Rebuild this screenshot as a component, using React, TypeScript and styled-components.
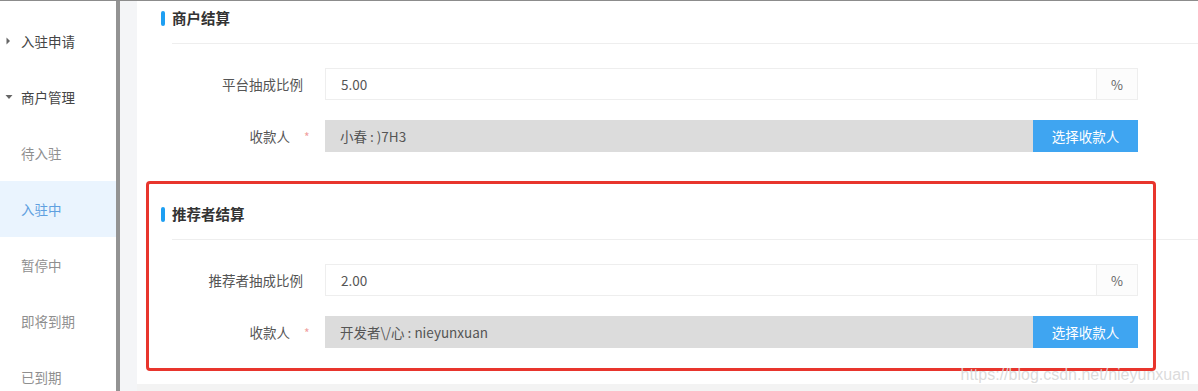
import React from "react";
import styled, { createGlobalStyle } from "styled-components";

const GlobalStyle = createGlobalStyle`
  html, body { margin: 0; padding: 0; background: #f3f3f3; }
  body { font-family: "Noto Sans CJK SC", "Noto Sans", sans-serif; }
  * { box-sizing: border-box; }
`;

const Page = styled.div`
  display: flex;
  width: 1198px;
  height: 391px;
  overflow: hidden;
  border-top: 1px solid #8c8c8c;
  background: #f3f3f3;
  position: relative;
`;

const Sidebar = styled.nav`
  width: 116px;
  flex: none;
  background: #ffffff;
  padding-top: 12px;
  display: flex;
  flex-direction: column;
  overflow: hidden;
`;

const SideItem = styled.div<{ $level: number; $active?: boolean }>`
  height: 56px;
  flex: none;
  display: flex;
  align-items: center;
  padding-left: 21px;
  position: relative;
  font-size: 13.5px;
  color: ${(p) => (p.$active ? "#5fa0e0" : p.$level === 0 ? "#454545" : "#8f8f8f")};
  background: ${(p) => (p.$active ? "#eaf4fe" : "transparent")};
`;

const Caret = styled.svg`
  position: absolute;
  left: 5px;
  top: 50%;
  transform: translateY(-50%);
`;

const Splitter = styled.div`
  width: 4px;
  flex: none;
  background: #939393;
`;

const Gutter = styled.div`
  width: 17px;
  flex: none;
  background: #f4f5f7;
`;

const Main = styled.main`
  flex: 1;
  height: 383px;
  background: #ffffff;
  padding-top: 7px;
  display: flex;
  flex-direction: column;
  gap: 52px;
`;

const Section = styled.section`
  position: relative;
  display: flex;
  flex-direction: column;
`;

const SectionHeader = styled.div`
  height: 20px;
  display: flex;
  align-items: center;
  gap: 7px;
  padding-left: 24px;
`;

const Bar = styled.span`
  width: 4px;
  height: 15px;
  border-radius: 2px;
  background: #1e9ff2;
`;

const Title = styled.h3`
  margin: 0;
  font-size: 14.5px;
  font-weight: 700;
  color: #333333;
  line-height: 20px;
`;

const Divider = styled.div`
  height: 1px;
  margin: 15px 0 0 35px;
  background: #eeeeee;
`;

const Form = styled.div`
  margin-top: 24px;
  display: flex;
  flex-direction: column;
  gap: 20px;
`;

const Row = styled.div`
  display: flex;
  align-items: center;
  height: 32px;
  margin-right: 60px;
`;

const Label = styled.label<{ $required?: boolean }>`
  width: 188px;
  flex: none;
  display: flex;
  justify-content: flex-end;
  align-items: center;
  padding-right: ${(p) => (p.$required ? "14px" : "22px")};
  font-size: 13.5px;
  color: #555555;
`;

const Star = styled.span`
  margin-left: 14px;
  width: 7px;
  color: #f0a0a0;
  font-size: 12px;
`;

const Field = styled.div<{ $readOnly?: boolean }>`
  flex: 1;
  height: 32px;
  display: flex;
  align-items: stretch;
  border: ${(p) => (p.$readOnly ? "none" : "1px solid #eeeeee")};
  background: ${(p) => (p.$readOnly ? "#dcdcdc" : "#ffffff")};
`;

const Value = styled.div`
  flex: 1;
  display: flex;
  align-items: center;
  padding-left: 15px;
  font-size: 13.5px;
  color: #555555;
`;

const Addon = styled.div`
  width: 41px;
  display: flex;
  align-items: center;
  justify-content: center;
  border-left: 1px solid #eeeeee;
  background: #fcfcfc;
  font-size: 13px;
  color: #666666;
`;

const PickButton = styled.button`
  width: 105px;
  border: none;
  background: #3fa5f1;
  color: #ffffff;
  font-family: inherit;
  font-size: 13.5px;
  padding: 0;
  cursor: pointer;
`;

const Highlight = styled.div`
  position: absolute;
  left: 9px;
  top: -23px;
  width: 1010px;
  height: 190px;
  border: 3px solid #e8352d;
  border-radius: 4px;
  pointer-events: none;
`;

const Watermark = styled.div`
  position: absolute;
  right: 8px;
  bottom: 7px;
  font-family: "Liberation Sans", Arial, sans-serif;
  font-size: 16px;
  color: rgba(215, 215, 215, 0.9);
  z-index: 2;
`;

const RightCaret = () => (
  <Caret width="6" height="8" viewBox="0 0 6 8">
    <path d="M1.5 0.5 L5 4 L1.5 7.5 Z" fill="#666" />
  </Caret>
);

const DownCaret = () => (
  <Caret width="8" height="6" viewBox="0 0 8 6">
    <path d="M0.5 1 L7.5 1 L4 5 Z" fill="#666" />
  </Caret>
);

type RowData = { label: string; value: string; required?: boolean; kind: "percent" | "pick" };

const SettlementSection: React.FC<{ title: string; rows: RowData[]; highlighted?: boolean }> = ({
  title,
  rows,
  highlighted,
}) => (
  <Section>
    {highlighted && <Highlight />}
    <SectionHeader>
      <Bar />
      <Title>{title}</Title>
    </SectionHeader>
    <Divider />
    <Form>
      {rows.map((r) => (
        <Row key={r.label}>
          <Label $required={r.required}>
            {r.label}
            {r.required && <Star>*</Star>}
          </Label>
          <Field $readOnly={r.kind === "pick"}>
            <Value>{r.value}</Value>
            {r.kind === "percent" ? <Addon>%</Addon> : <PickButton>选择收款人</PickButton>}
          </Field>
        </Row>
      ))}
    </Form>
  </Section>
);

export default function App() {
  return (
    <>
      <GlobalStyle />
      <Page>
        <Sidebar>
          <SideItem $level={0}>
            <RightCaret />
            入驻申请
          </SideItem>
          <SideItem $level={0}>
            <DownCaret />
            商户管理
          </SideItem>
          <SideItem $level={1}>待入驻</SideItem>
          <SideItem $level={1} $active>
            入驻中
          </SideItem>
          <SideItem $level={1}>暂停中</SideItem>
          <SideItem $level={1}>即将到期</SideItem>
          <SideItem $level={1}>已到期</SideItem>
        </Sidebar>
        <Splitter />
        <Gutter />
        <Main>
          <SettlementSection
            title="商户结算"
            rows={[
              { label: "平台抽成比例", value: "5.00", kind: "percent" },
              { label: "收款人", value: "小春 : )7H3", required: true, kind: "pick" },
            ]}
          />
          <SettlementSection
            title="推荐者结算"
            highlighted
            rows={[
              { label: "推荐者抽成比例", value: "2.00", kind: "percent" },
              { label: "收款人", value: "开发者\\/心 : nieyunxuan", required: true, kind: "pick" },
            ]}
          />
        </Main>
        <Watermark>https://blog.csdn.net/nieyunxuan</Watermark>
      </Page>
    </>
  );
}
